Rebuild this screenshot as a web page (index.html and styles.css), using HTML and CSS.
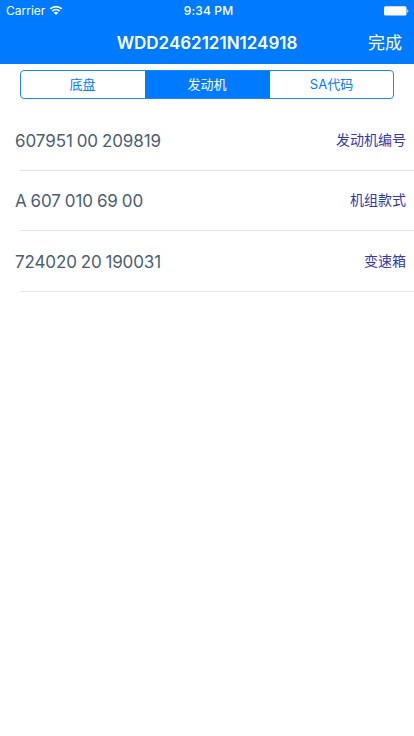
FILE: index.html
```html
<!DOCTYPE html>
<html lang="zh-CN">
<head>
<meta charset="UTF-8" />
<meta name="viewport" content="width=device-width, initial-scale=1" />
<title>WDD2462121N124918</title>
<link rel="stylesheet" href="styles.css">
</head>
<body>
  <header class="header">
    <div class="status-bar">
      <div class="carrier">
        <span>Carrier</span>
        <svg class="wifi" width="14" height="11" viewBox="0 0 14 11">
          <path d="M1.3 3.9a8.2 8.2 0 0 1 11.4 0" />
          <path d="M3.4 6.1a5.2 5.2 0 0 1 7.2 0" />
          <path class="dot" d="M4.8 7.8a3.2 3.2 0 0 1 4.4 0L7 10z" />
        </svg>
      </div>
      <div class="time">9:34 PM</div>
      <svg class="battery" width="25" height="10" viewBox="0 0 25 10">
        <rect x="0" y="0.2" width="22.5" height="9.4" rx="1.6" />
        <path d="M23.3 3.3a1.9 1.9 0 0 1 0 3.4z" />
      </svg>
    </div>
    <div class="nav-bar">
      <h1>WDD2462121N124918</h1>
      <button class="done" type="button">完成</button>
    </div>
  </header>

  <main>
    <div class="tabs">
      <button class="tab" type="button">底盘</button>
      <button class="tab active" type="button">发动机</button>
      <button class="tab" type="button">SA代码</button>
    </div>

    <ul class="list">
      <li class="row"><span class="value">607951 00 209819</span><span class="label">发动机编号</span></li>
      <li class="row"><span class="value">A 607 010 69 00</span><span class="label">机组款式</span></li>
      <li class="row"><span class="value">724020 20 190031</span><span class="label">变速箱</span></li>
    </ul>
  </main>
</body>
</html>
```

FILE: styles.css
```css
* {
  box-sizing: border-box;
}
body {
  margin: 0;
  font-family: Inter, "Noto Sans CJK SC", sans-serif;
  background: #fff;
}
button {
  margin: 0;
  padding: 0;
  border: none;
  background: none;
  font-family: inherit;
}
.header {
  height: 64px;
  background: #007aff;
  color: #fff;
}
.status-bar {
  display: grid;
  grid-template-columns: 1fr auto 1fr;
  align-items: center;
  height: 20px;
  padding: 1px 5px 0 6px;
  font-size: 12px;
  line-height: 20px;
}
.carrier {
  display: flex;
  align-items: center;
  gap: 4px;
}
.time {
  padding-left: 2px;
  font-weight: 500;
  letter-spacing: 0.15px;
}
.wifi {
  margin-bottom: 2px;
  fill: none;
  stroke: #fff;
  stroke-width: 1.7;
}
.wifi .dot {
  fill: #fff;
  stroke: none;
}
.battery {
  justify-self: end;
  fill: #fff;
}
.nav-bar {
  display: grid;
  grid-template-columns: 1fr auto 1fr;
  align-items: center;
  height: 44px;
  padding: 0 12px;
}
.nav-bar h1 {
  grid-column: 2;
  margin: 0;
  padding-top: 1px;
  font-size: 17px;
  font-weight: 600;
}
.done {
  justify-self: end;
  padding-bottom: 2px;
  color: #fff;
  font-size: 17px;
  font-weight: 400;
}
.tabs {
  display: grid;
  grid-template-columns: 124px 125px 1fr;
  height: 29px;
  margin: 6px 20px 12px;
  border: 1px solid #1a87ff;
  border-radius: 4px;
  overflow: hidden;
}
.tab {
  padding: 0 1px 2px 0;
  color: #007aff;
  font-size: 13px;
}
.tab:last-child {
  padding-right: 0;
}
.tab.active {
  background: #007aff;
  color: #fff;
}
.list {
  margin: 0;
  padding: 0;
  list-style: none;
}
.row {
  display: flex;
  justify-content: space-between;
  align-items: center;
  height: 60px;
  padding: 0 8px 0 15px;
  background: linear-gradient(#e4e4e7, #e4e4e7) 20px 100% / 100% 1px no-repeat;
}
.value {
  color: #4a6073;
  font-size: 17px;
  letter-spacing: -0.07px;
  word-spacing: -0.8px;
}
.row:last-child {
  height: 61px;
}
.row:last-child .value {
  letter-spacing: -0.12px;
}
.label {
  padding-bottom: 4px;
  color: #3538a8;
  font-size: 14px;
}
```
